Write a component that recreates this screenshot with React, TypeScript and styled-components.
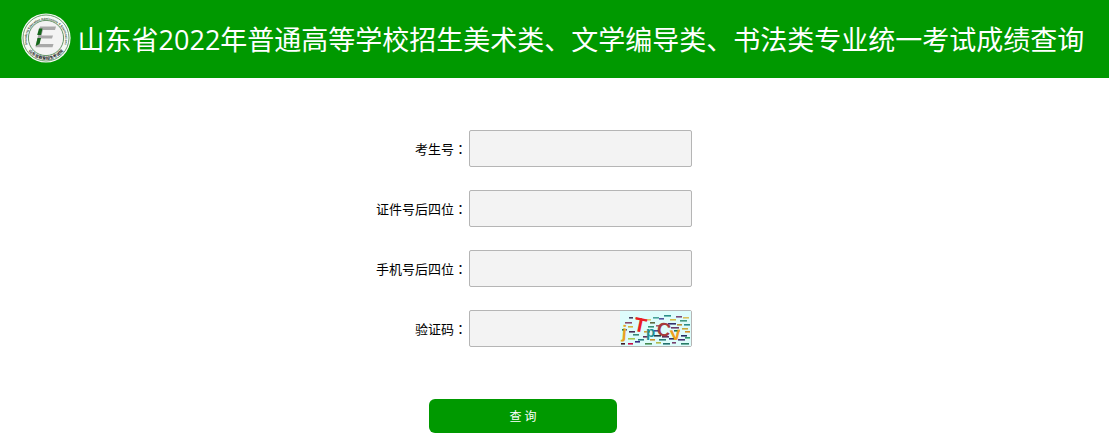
import React from "react";
import styled, { createGlobalStyle } from "styled-components";

const GlobalStyle = createGlobalStyle`
  * { box-sizing: border-box; }
  body {
    margin: 0;
    background: #fff;
    color: #000;
    font-family: "Open Sans", "Noto Sans CJK SC", sans-serif;
    font-size: 13px;
  }
`;

const Header = styled.header`
  display: flex;
  align-items: center;
  justify-content: center;
  gap: 7px;
  min-height: 78px;
  padding: 0 4px 2px 0;
  background: #009900;
`;

const Logo = styled.svg`
  flex: none;
  width: 50px;
  height: 50px;
`;

const Title = styled.h1`
  margin: 0;
  padding-top: 4px;
  color: #fff;
  font-size: 27px;
  line-height: 40px;
  font-weight: 400;
  white-space: nowrap;
`;

const Form = styled.form`
  width: 401px;
  max-width: 100%;
  margin: 0 auto;
  padding: 52px 0 11px;
`;

const Fields = styled.div`
  display: grid;
  gap: 23px;
`;

const Row = styled.div`
  display: flex;
  align-items: center;
`;

const Label = styled.label`
  flex: none;
  width: 115px;
  padding-right: 2px;
  text-align: right;
  line-height: 20px;
`;

const Colon = styled.span`
  font-family: "Noto Sans CJK TC", sans-serif;
`;

const Box = styled.div`
  display: flex;
  width: 223px;
  height: 37px;
  border: 1px solid #b5b5b5;
  border-radius: 2px;
  background: #f3f3f3;
`;

const Input = styled.input`
  flex: 1;
  min-width: 0;
  padding: 0 8px;
  border: 0;
  outline: 0;
  background: transparent;
  font: inherit;
`;

const Captcha = styled.svg`
  flex: none;
  width: 71px;
  height: 35px;
`;

const Submit = styled.button`
  display: block;
  width: 188px;
  height: 34px;
  margin: 52px 0 0 75px;
  border: 0;
  border-radius: 6px;
  background: #009900;
  color: #fff;
  font: inherit;
  font-size: 12px;
  cursor: pointer;
`;

type Dash = [x: number, y: number, width: number, color: string];

const dashes: Dash[] = [
  [44, 4, 7, "#2a8f8a"], [56, 5, 6, "#7a4a78"], [63, 6, 6, "#d9c060"],
  [9, 6, 4, "#444060"], [16, 7, 6, "#c9a23c"], [33, 6, 6, "#4aa39a"], [26, 8, 5, "#d8c86a"],
  [39, 7, 5, "#54509a"], [50, 8, 6, "#d4bb48"], [60, 9, 7, "#439a80"],
  [5, 11, 7, "#8a4a6a"], [30, 11, 5, "#5d6a3c"], [48, 12, 8, "#35306a"], [57, 13, 5, "#b78f3a"], [64, 13, 6, "#2b8c8a"],
  [8, 15, 5, "#d0b43c"], [28, 15, 6, "#3a8f72"], [36, 14, 4, "#a85a72"], [51, 16, 8, "#6a3a68"], [62, 17, 6, "#c8a838"],
  [2, 18, 5, "#2b6b6f"], [9, 20, 6, "#482c54"], [24, 20, 6, "#c9a034"], [34, 19, 5, "#504a90"], [54, 19, 6, "#236e58"], [65, 20, 5, "#d0902c"],
  [13, 23, 6, "#398a7b"], [23, 25, 5, "#603055"], [34, 24, 7, "#263c48"], [42, 25, 7, "#5a2d58"], [61, 24, 6, "#252c60"],
  [8, 27, 7, "#a7c850"], [18, 28, 6, "#2b7f80"], [30, 28, 5, "#cc922c"], [39, 28, 7, "#287d78"], [49, 27, 5, "#34306a"], [58, 28, 7, "#443070"], [65, 26, 5, "#2f9a68"],
  [1, 32, 4, "#421a22"], [8, 32, 5, "#c90c48"], [15, 30, 5, "#342c80"], [25, 32, 7, "#458b50"], [36, 31, 5, "#b3b94a"], [43, 32, 7, "#22706e"], [52, 31, 4, "#76406e"], [61, 32, 8, "#277c66"],
];

function Field({ id, label, children }: { id: string; label: string; children?: React.ReactNode }) {
  return (
    <Row>
      <Label htmlFor={id}>{label}<Colon>：</Colon></Label>
      <Box><Input id={id} type="text" />{children}</Box>
    </Row>
  );
}

export default function App() {
  return (
    <>
      <GlobalStyle />
      <Header>
        <Logo viewBox="0 0 50 50" aria-hidden="true">
          <defs>
            <path id="upper" d="M6.8 32.5A19.3 19.3 0 1 1 43.2 32.5" />
            <path id="lower" d="M5.5 34.5A21.7 21.7 0 0 0 44.5 34.5" />
          </defs>
          <circle cx="25" cy="25" r="24.6" fill="#f6f9f6" />
          <circle cx="25" cy="25" r="23" fill="none" stroke="#4f8a4f" strokeWidth="0.8" />
          <circle cx="25" cy="25" r="17.6" fill="#f3f3f3" stroke="#3f7a42" strokeWidth="0.8" />
          <text fontFamily="Liberation Sans" fontSize="3" fontWeight="700" fill="#2d4a30">
            <textPath href="#upper" startOffset="50%" textAnchor="middle">Shandong Education Admissions &amp; Examinations</textPath>
          </text>
          <text fontFamily="Noto Sans CJK SC" fontSize="4" fontWeight="700" fill="#222">
            <textPath href="#lower" startOffset="50%" textAnchor="middle">山东省教育招生考试院</textPath>
          </text>
          <path d="M19 13.5H35L34 17H22L20.5 22.5H32L31 25.5H19.5L18 31H32.5L31.5 34.2H14.5Z" fill="#a9a9a9" />
          <path d="M18 15.5H21.5L20 22H16.2ZM16.5 25H20L18.5 31L14.6 33Z" fill="#14661a" />
        </Logo>
        <Title>山东省2022年普通高等学校招生美术类、文学编导类、书法类专业统一考试成绩查询</Title>
      </Header>
      <Form onSubmit={(e) => e.preventDefault()}>
        <Fields>
          <Field id="candidate" label="考生号" />
          <Field id="identity" label="证件号后四位" />
          <Field id="phone" label="手机号后四位" />
          <Field id="code" label="验证码">
            <Captcha viewBox="0 0 71 35" role="img" aria-label="验证码">
              <rect width="71" height="35" fill="#defcfb" />
              {dashes.map(([x, y, width, color]) => (
                <rect key={`${x}-${y}`} x={x} y={y} width={width} height="1.6" fill={color} />
              ))}
              <g fontFamily="Liberation Sans" fontWeight="700">
                <text x="2" y="27" fontSize="18" fill="#e6a423" transform="rotate(4 4 20)">j</text>
                <text x="14" y="21" fontSize="20" fill="#ea1c24" transform="rotate(12 20 14)">T</text>
                <text x="26" y="26" fontSize="15" fill="#1f8f92">p</text>
                <text x="37" y="25" fontSize="19" fill="#a63a3c" transform="rotate(10 44 18)">C</text>
                <text x="50" y="29" fontSize="19" fill="#f0a01e" transform="rotate(-6 55 23)">v</text>
              </g>
            </Captcha>
          </Field>
        </Fields>
        <Submit type="submit">查 询</Submit>
      </Form>
    </>
  );
}
